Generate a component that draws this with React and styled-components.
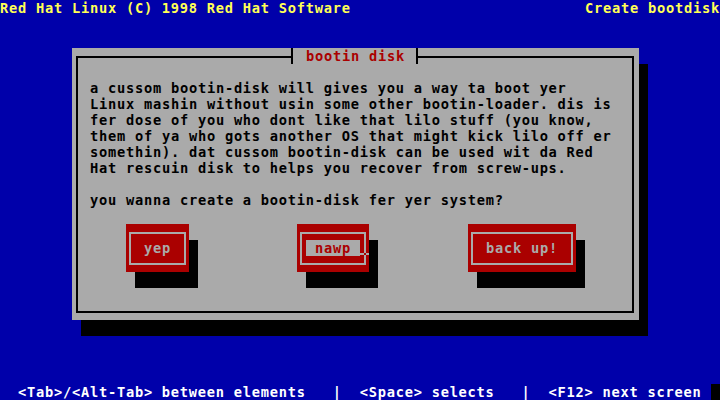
import React from "react";
import styled, { createGlobalStyle } from "styled-components";

const VGA = {
  blue: "#0000AA",
  gray: "#AAAAAA",
  red: "#AA0000",
  yellow: "#FFFF55",
  white: "#FFFFFF",
  black: "#000000",
};

const GlobalStyle = createGlobalStyle`
  html, body {
    margin: 0;
    padding: 0;
    background: ${VGA.blue};
  }
  body {
    font-family: "DejaVu Sans Mono", "Liberation Mono", monospace;
    font-weight: bold;
    font-size: 13.7px;
    line-height: 16px;
    letter-spacing: 0.752px;
  }
`;

const Screen = styled.div`
  width: 720px;
  height: 400px;
  display: flex;
  flex-direction: column;
  background: ${VGA.blue};
  overflow: hidden;
`;

const TopBar = styled.div`
  height: 16px;
  display: flex;
  justify-content: space-between;
  color: ${VGA.yellow};
  white-space: pre;
`;

const Main = styled.div`
  flex: 1;
  padding: 32px 0 0 72px;
`;

const Window = styled.div`
  position: relative;
  box-sizing: border-box;
  width: 567px;
  height: 272px;
  padding: 8px 5px 7px 4px;
  background: ${VGA.gray};
  box-shadow: 9px 16px 0 ${VGA.black};
`;

const Frame = styled.div`
  box-sizing: border-box;
  height: 100%;
  border: 2px solid ${VGA.black};
  padding: 22px 0 0 12px;
  color: ${VGA.black};
  display: flex;
  flex-direction: column;
`;

const Title = styled.div`
  position: absolute;
  top: 0;
  left: 219px;
  height: 16px;
  padding: 0 11px 0 13px;
  border-left: 2px solid ${VGA.black};
  border-right: 2px solid ${VGA.black};
  background: ${VGA.gray};
  color: ${VGA.red};
  white-space: pre;
`;

const Paragraph = styled.div`
  white-space: pre;
`;

const Line = styled.div`
  height: 16px;
`;

const Question = styled.div`
  margin-top: 16px;
  height: 16px;
  white-space: pre;
`;

const ButtonRow = styled.div`
  display: flex;
  margin-top: 16px;
  padding-left: 36px;
`;

const Button = styled.div`
  position: relative;
  padding: 8px 3px 7px 3px;
  margin-left: ${(p) => p.$gap || 0}px;
  background: ${VGA.red};
  box-shadow: 9px 16px 0 ${VGA.black};
`;

const ButtonInner = styled.div`
  border: 2px solid ${VGA.gray};
  padding: 6px 4px 7px 4px;
  display: flex;
`;

const Label = styled.span`
  height: 16px;
  padding: 0 9px;
  white-space: pre;
  color: ${(p) => (p.$focused ? VGA.red : VGA.gray)};
  background: ${(p) => (p.$focused ? VGA.gray : "transparent")};
`;

const Cursor = styled.div`
  position: absolute;
  top: 29px;
  right: 0;
  width: 9px;
  height: 2px;
  background: ${VGA.gray};
  &::after {
    content: "";
    position: absolute;
    left: 4px;
    top: 0;
    width: 2px;
    height: 2px;
    background: ${VGA.red};
  }
`;

const Footer = styled.div`
  height: 16px;
  display: flex;
  color: ${VGA.white};
  white-space: pre;
`;

const BlockCell = styled.span`
  margin-left: auto;
  width: 9px;
  height: 16px;
  background: ${VGA.black};
`;

const lines = [
  "a cussom bootin-disk will gives you a way ta boot yer",
  "Linux mashin without usin some other bootin-loader. dis is",
  "fer dose of you who dont like that lilo stuff (you know,",
  "them of ya who gots another OS that might kick lilo off er",
  "somethin). dat cussom bootin-disk can be used wit da Red",
  "Hat rescuin disk to helps you recover from screw-ups.",
];

const buttons = [
  { label: "yep", gap: 0 },
  { label: "nawp", gap: 108, focused: true },
  { label: "back up!", gap: 99 },
];

export default function App() {
  return (
    <>
      <GlobalStyle />
      <Screen>
        <TopBar>
          <span>Red Hat Linux (C) 1998 Red Hat Software</span>
          <span>Create bootdisk</span>
        </TopBar>
        <Main>
          <Window>
            <Title>bootin disk</Title>
            <Frame>
              <Paragraph>
                {lines.map((l) => (
                  <Line key={l}>{l}</Line>
                ))}
              </Paragraph>
              <Question>you wanna create a bootin-disk fer yer system?</Question>
              <ButtonRow>
                {buttons.map((b) => (
                  <Button key={b.label} $gap={b.gap}>
                    <ButtonInner>
                      <Label $focused={b.focused}>{b.label}</Label>
                    </ButtonInner>
                    {b.focused && <Cursor />}
                  </Button>
                ))}
              </ButtonRow>
            </Frame>
          </Window>
        </Main>
        <Footer>
          <span>{"  <Tab>/<Alt-Tab> between elements   |  <Space> selects   |  <F12> next screen "}</span>
          <BlockCell />
        </Footer>
      </Screen>
    </>
  );
}
